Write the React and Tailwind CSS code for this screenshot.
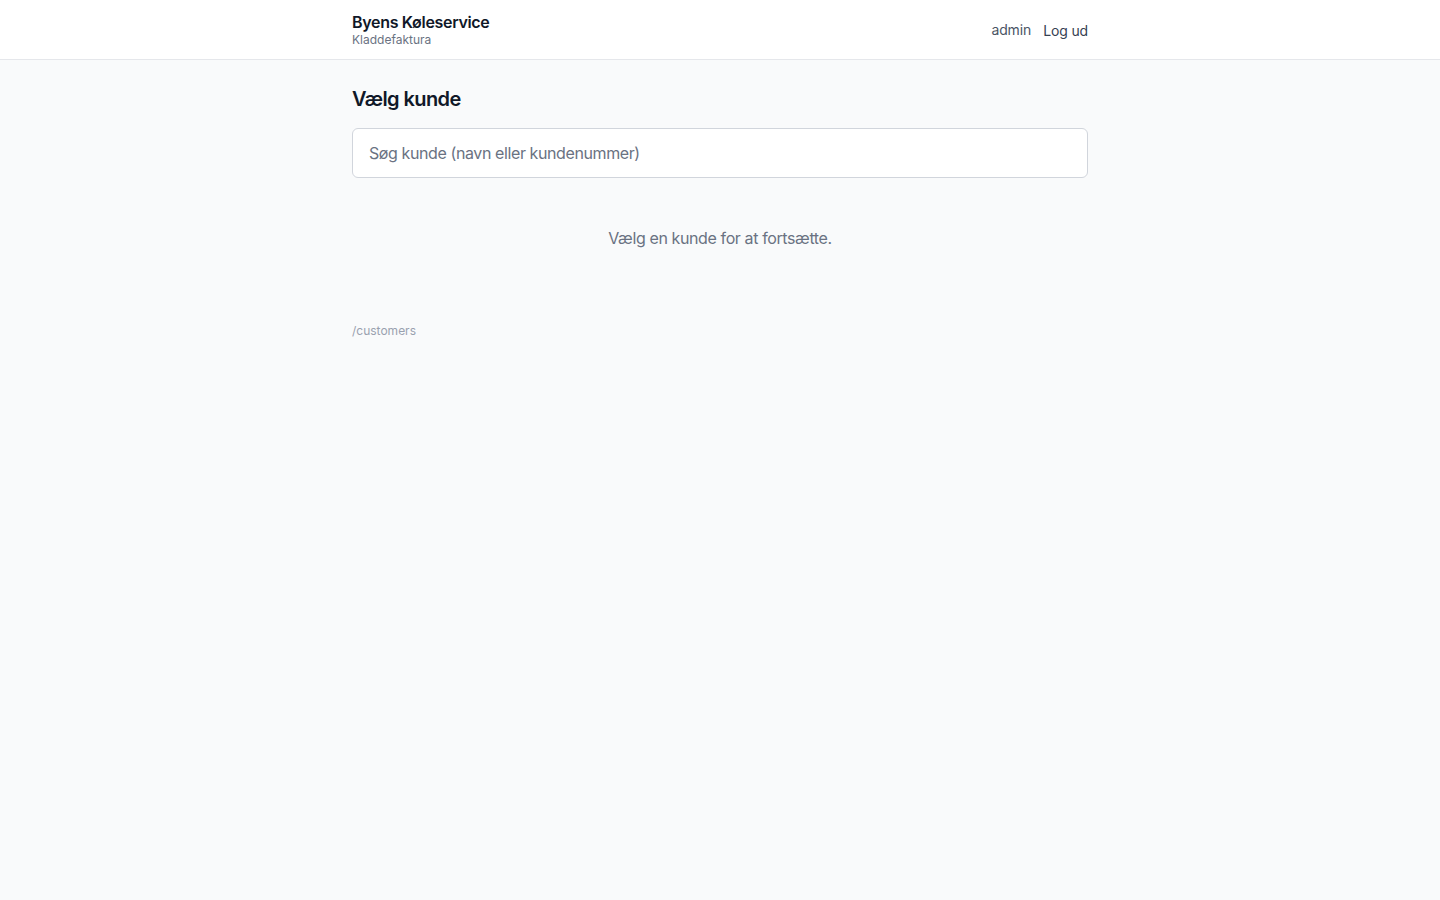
import React from "react";

function Header() {
  return (
    <header className="h-[60px] bg-white border-b border-gray-200">
      <div className="max-w-3xl mx-auto px-4 h-full flex items-center justify-between">
        <div>
          <div className="text-base leading-5 font-semibold text-gray-900 tracking-[-0.02em]">Byens Køleservice</div>
          <div className="text-xs leading-4 text-gray-500">Kladdefaktura</div>
        </div>
        <div className="flex items-center gap-3 text-sm tracking-[-0.01em]">
          <span className="text-gray-600">admin</span>
          <button className="text-gray-700 pt-0.5">Log ud</button>
        </div>
      </div>
    </header>
  );
}

export default function App() {
  return (
    <div className="min-h-screen bg-gray-50" style={{ fontFamily: "Inter, 'Noto Sans', sans-serif" }}>
      <Header />
      <main className="max-w-3xl mx-auto px-4 pt-[25px] pb-6">
        <h1 className="text-xl font-semibold text-gray-900 mb-[15px] tracking-[-0.03em]">Vælg kunde</h1>
        <input
          type="text"
          placeholder="Søg kunde (navn eller kundenummer)"
          className="w-full bg-white border border-gray-300 rounded-md px-4 py-3 text-base leading-6 tracking-[-0.025em] text-gray-900 placeholder:text-gray-500 outline-none"
        />
        <div className="py-12 text-center text-base tracking-[-0.024em] text-gray-500">Vælg en kunde for at fortsætte.</div>
        <footer className="mt-[25px] text-xs text-gray-400">/customers</footer>
      </main>
    </div>
  );
}
